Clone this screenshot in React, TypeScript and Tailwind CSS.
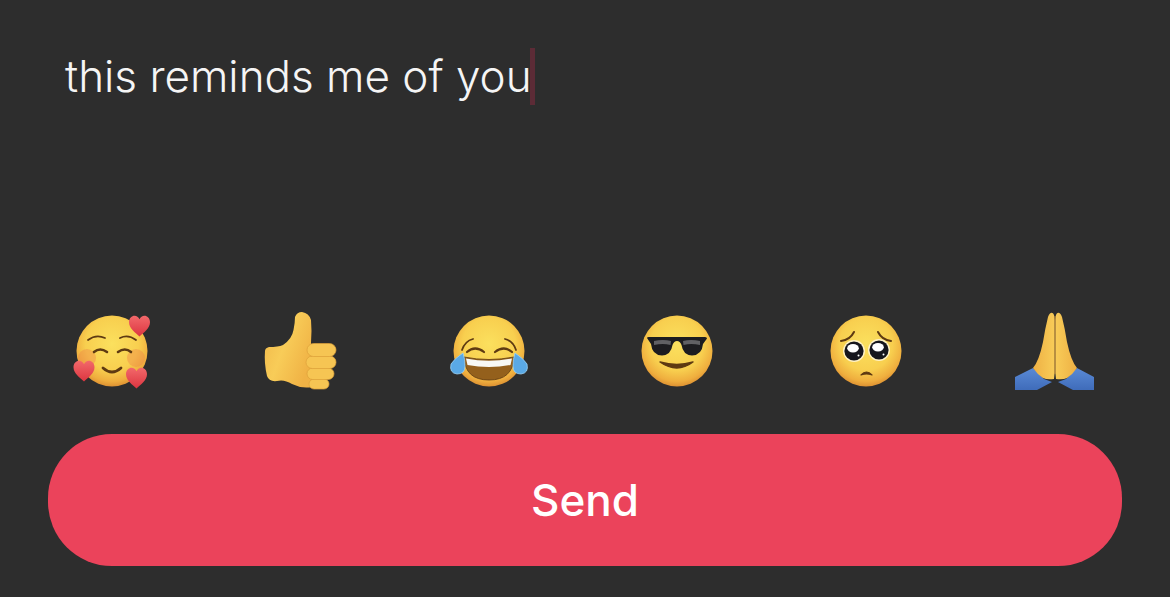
const Face = ({ id }: { id: string }) => (
  <>
    <defs>
      <radialGradient id={id} cx="50%" cy="40%" r="62%">
        <stop offset="0%" stopColor="#fbe05e" />
        <stop offset="60%" stopColor="#f8cf4f" />
        <stop offset="85%" stopColor="#efae3e" />
        <stop offset="100%" stopColor="#d8892f" />
      </radialGradient>
    </defs>
    <circle cx="40" cy="40" r="35.5" fill={`url(#${id})`} />
  </>
);

const Heart = ({ x, y, id }: { x: number; y: number; id: string }) => (
  <>
    <defs>
      <linearGradient id={id} x1="0" y1="0" x2="0" y2="1">
        <stop offset="0%" stopColor="#f2686a" />
        <stop offset="100%" stopColor="#dc3540" />
      </linearGradient>
    </defs>
    <path
      transform={`translate(${x} ${y})`}
      d="M0 10.5 C-4 6.5 -10.5 2.5 -10.5 -3.8 C-10.5 -8 -7.6 -10.2 -5 -10.2 C-2.8 -10.2 -1 -9 0 -6.8 C1 -9 2.8 -10.2 5 -10.2 C7.6 -10.2 10.5 -8 10.5 -3.8 C10.5 2.5 4 6.5 0 10.5 Z"
      fill={`url(#${id})`}
    />
  </>
);

const Smiling = () => (
  <svg viewBox="0 0 80 80" className="w-20 h-20">
    <Face id="f1" />
    <circle cx="15" cy="47" r="9" fill="#ee8248" opacity="0.4" />
    <circle cx="64" cy="47" r="9" fill="#ee8248" opacity="0.4" />
    <g fill="none" stroke="#5e3a12" strokeLinecap="round">
      <path d="M16 29 Q24 23 33 27" strokeWidth="1.8" />
      <path d="M48 27 Q56 23 64 29" strokeWidth="1.8" />
      <path d="M22 41 Q28 36 35 41" strokeWidth="2.6" />
      <path d="M46 41 Q53 36 59 41" strokeWidth="2.6" />
      <path d="M31 57 Q40 65 49 57" strokeWidth="2.8" />
    </g>
    <Heart x={67.5} y={15} id="h1" />
    <Heart x={12} y={60} id="h2" />
    <Heart x={64.5} y={67} id="h3" />
  </svg>
);

const ThumbsUp = () => (
  <svg viewBox="0 0 80 80" className="w-20 h-20">
    <defs>
      <linearGradient id="t1" x1="0" y1="0" x2="1" y2="0.6">
        <stop offset="0%" stopColor="#f0b648" />
        <stop offset="50%" stopColor="#f8cc58" />
        <stop offset="100%" stopColor="#f0b245" />
      </linearGradient>
    </defs>
    <path
      d="M5 40 Q5 37 9 36 Q18 36 23 34 Q32 28 33.5 19 Q35 12 35 6 Q37 1 42 1 Q49 2 51 9 Q52 20 51 32 L52 76 Q42 78 32 73 Q24 68 17 70 Q9 71 7 65 Q4 52 5 40 Z"
      fill="url(#t1)"
    />
    <g fill="#f6c553" stroke="#dca03a" strokeWidth="0.7">
      <rect x="49" y="68" width="20" height="10" rx="5" />
      <rect x="47" y="57" width="27" height="11.5" rx="5.7" />
      <rect x="46" y="45" width="30" height="12.5" rx="6.2" />
      <rect x="47" y="32.5" width="29" height="13" rx="6.5" />
    </g>
  </svg>
);

const Tear = ({ d }: { d: string }) => <path d={d} fill="#5aa9e6" stroke="#9bd2f5" strokeWidth="0.8" />;

const Laughing = () => (
  <svg viewBox="0 0 80 80" className="w-20 h-20">
    <Face id="f2" />
    <g fill="none" stroke="#5e3a12" strokeLinecap="round">
      <path d="M13 39 Q16 30 24 28" strokeWidth="1.8" />
      <path d="M67 39 Q64 30 56 28" strokeWidth="1.8" />
      <path d="M18 41 Q26 34 35 41" strokeWidth="2.2" />
      <path d="M46 41 Q55 34 63 41" strokeWidth="2.2" />
    </g>
    <path d="M15 46 Q40 51 65 46 Q64 69 40 69 Q16 69 15 46 Z" fill="#94601c" stroke="#5e3a12" strokeWidth="0.8" />
    <path d="M17 47.5 Q40 52 63 47.5 L61.5 54 Q40 58 18.5 54 Z" fill="#f8f8f4" />
    <Tear d="M14 42 Q5 48 2 53 Q0 62 8 63 Q16 63 16 55 Q16 48 14 42 Z" />
    <Tear d="M66 42 Q75 48 78 53 Q80 62 72 63 Q64 63 64 55 Q64 48 66 42 Z" />
  </svg>
);

const Sunglasses = () => (
  <svg viewBox="0 0 80 80" className="w-20 h-20">
    <Face id="f3" />
    <path
      d="M10 27 Q10 26 12 26 L68 26 Q70 26 70 27.5 L66 33 Q65 44 55 44.5 Q46 44 44.5 34 Q43 30 40 30 Q37 30 35.5 34 Q34 44 25 44.5 Q15 44 14 33 Z"
      fill="#1c1c20"
    />
    <path d="M17 30 Q26 28 34 30 L33.5 34 Q26 32 17 34 Z" fill="#77777b" opacity="0.75" />
    <path d="M46 30 Q54 28 63 30 L63 34 Q54 32 46.5 34 Z" fill="#77777b" opacity="0.75" />
    <path d="M23 51 Q40 63 56 51 Q40 56 23 51 Z" fill="#5e3a12" stroke="#5e3a12" strokeWidth="1.4" strokeLinejoin="round" />
  </svg>
);

const Eye = ({ cx, cy }: { cx: number; cy: number }) => (
  <>
    <circle cx={cx} cy={cy} r="11" fill="#fff2c4" />
    <circle cx={cx} cy={cy} r="9.6" fill="#16161d" />
    <ellipse cx={cx - 1} cy={cy - 2.8} rx="5.8" ry="4.2" fill="#fff" />
    <circle cx={cx + 4.5} cy={cy + 4.5} r="1" fill="#fff" />
  </>
);

const Pleading = () => (
  <svg viewBox="0 0 80 80" className="w-20 h-20">
    <Face id="f4" />
    <g fill="none" stroke="#5e3a12" strokeLinecap="round" strokeWidth="2">
      <path d="M15 30 Q24 29 28 21" />
      <path d="M52 21 Q56 29 65 30" />
    </g>
    <Eye cx={28} cy={40} />
    <Eye cx={53} cy={39} />
    <path d="M35 64 Q40.5 58 46 64 Q40.5 62 35 64 Z" fill="#5e3a12" stroke="#5e3a12" strokeWidth="1.2" strokeLinejoin="round" />
  </svg>
);

const Pray = () => (
  <svg viewBox="0 0 80 80" className="w-20 h-20">
    <defs>
      <linearGradient id="p1" x1="0" y1="0" x2="0" y2="1">
        <stop offset="0%" stopColor="#5a8ad6" />
        <stop offset="100%" stopColor="#3f6cba" />
      </linearGradient>
      <linearGradient id="p2" x1="0" y1="0" x2="1" y2="0">
        <stop offset="0%" stopColor="#eeb044" />
        <stop offset="100%" stopColor="#f8cc58" />
      </linearGradient>
      <linearGradient id="p3" x1="1" y1="0" x2="0" y2="0">
        <stop offset="0%" stopColor="#eeb044" />
        <stop offset="100%" stopColor="#f8cc58" />
      </linearGradient>
    </defs>
    <path d="M1 66 L19 57 L30 68 L38 71 L23 79 L1 79 Z" fill="url(#p1)" />
    <path d="M80 66 L63 57 L52 68 L44 71 L59 79 L80 79 Z" fill="url(#p1)" />
    <path d="M40.6 62 L40 68 Q33 69 29 67 Q23 63 19 57 Q25 50 29 31 Q31 18 34 6 Q36 1 38.5 2 Q40.6 3 40.6 9 Z" fill="url(#p2)" />
    <path d="M41.4 62 L42 68 Q49 69 53 67 Q59 63 63 57 Q57 50 53 31 Q51 18 48 6 Q46 1 43.5 2 Q41.4 3 41.4 9 Z" fill="url(#p3)" />
    <path d="M41 5 L41 63" stroke="#d0953a" strokeWidth="0.8" />
  </svg>
);

export default function App() {
  return (
    <div className="w-[1170px] h-[597px] bg-[#2d2d2d] flex flex-col overflow-hidden font-['Inter',sans-serif]">
      <div className="h-[311px] pt-[48px] pl-[65px] flex items-start">
        <span className="text-[44px] leading-[57px] font-[350] text-[#f5f5f5]">this reminds me of you</span>
        <span className="w-[5px] h-[57px] ml-[-2px] bg-[#5c2b36]" />
      </div>

      {/* Quick reactions */}
      <div className="h-[80px] pl-[72px] pr-[76px] flex justify-between">
        <Smiling />
        <ThumbsUp />
        <Laughing />
        <Sunglasses />
        <Pleading />
        <Pray />
      </div>

      <button className="mt-[43px] mx-[48px] h-[132px] rounded-[64px] bg-[#eb435b] text-white text-[44px] font-medium">
        Send
      </button>
    </div>
  );
}
